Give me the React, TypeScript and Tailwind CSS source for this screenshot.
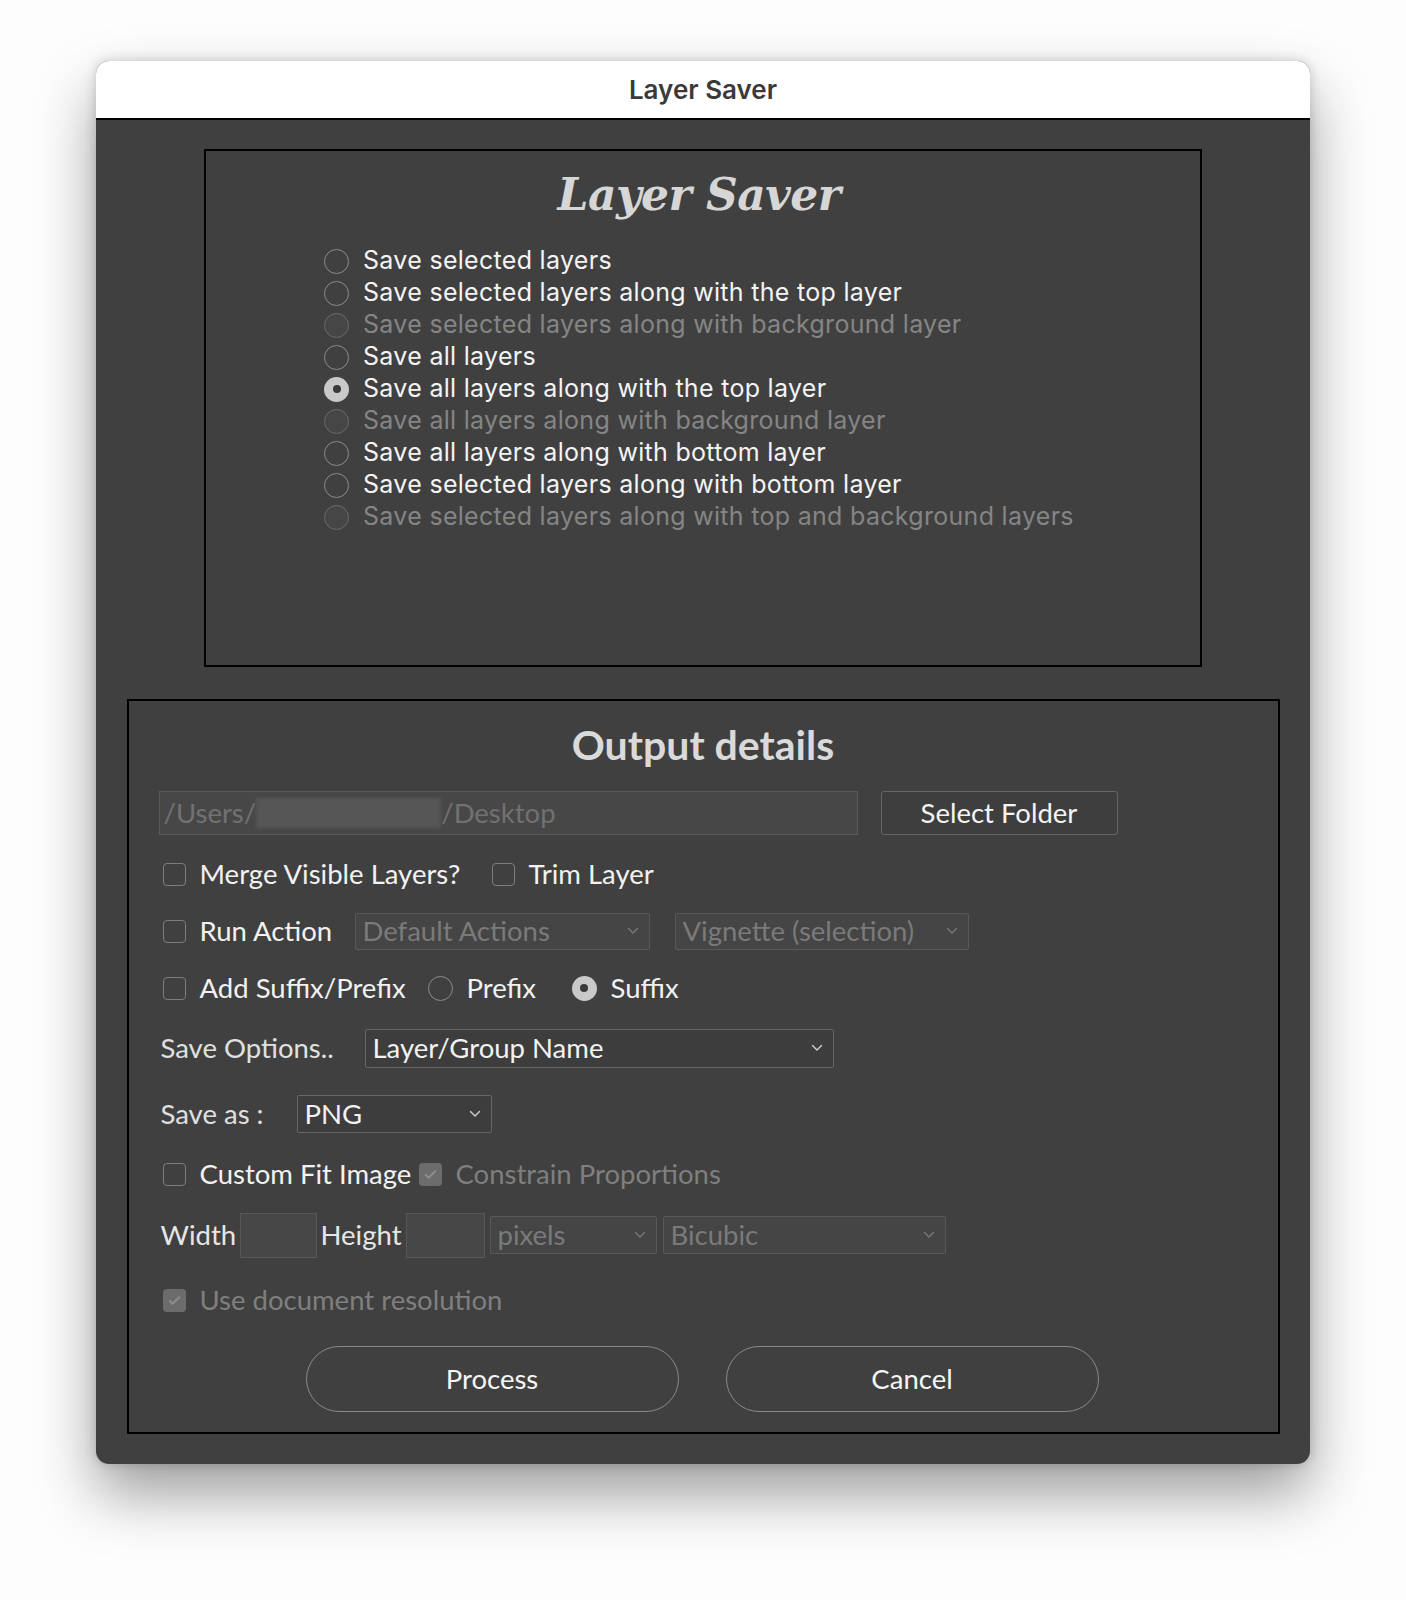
import React from 'react';

const sf = "font-['Inter','Noto_Sans',sans-serif]";
const my = "font-['Lato','Open_Sans',sans-serif]";

const layerOptions = [
  { label: 'Save selected layers' },
  { label: 'Save selected layers along with the top layer' },
  { label: 'Save selected layers along with background layer', disabled: true },
  { label: 'Save all layers' },
  { label: 'Save all layers along with the top layer', checked: true },
  { label: 'Save all layers along with background layer', disabled: true },
  { label: 'Save all layers along with bottom layer' },
  { label: 'Save selected layers along with bottom layer' },
  { label: 'Save selected layers along with top and background layers', disabled: true },
];

const Radio: React.FC<{ checked?: boolean; disabled?: boolean }> = ({ checked, disabled }) => {
  if (checked) {
    return (
      <span className="w-[25px] h-[25px] rounded-full bg-[#c9c9c9] flex items-center justify-center shrink-0">
        <span className="w-[8px] h-[8px] rounded-full bg-[#3a3a3a]" />
      </span>
    );
  }
  return (
    <span
      className={`w-[25px] h-[25px] rounded-full border-[1.5px] shrink-0 ${
        disabled ? 'border-[#6b6b6b] bg-[#464646]' : 'border-[#8c8c8c]'
      }`}
    />
  );
};

const Checkbox: React.FC<{ checked?: boolean; disabled?: boolean }> = ({ checked, disabled }) => {
  if (checked && disabled) {
    return (
      <span className="w-[23px] h-[23px] rounded-[4px] bg-[#6c6c6c] flex items-center justify-center shrink-0">
        <svg width="15" height="15" viewBox="0 0 16 16" fill="none">
          <path d="M3 8.5l3 3 7-7" stroke="#8c8c8c" strokeWidth="2.2" strokeLinecap="round" strokeLinejoin="round" />
        </svg>
      </span>
    );
  }
  return <span className="w-[23px] h-[23px] rounded-[4px] border-[1.5px] border-[#7d7d7d] shrink-0" />;
};

const Chevron: React.FC<{ color?: string }> = ({ color = '#d0d0d0' }) => (
  <svg width="12" height="8" viewBox="0 0 12 8" fill="none" className="shrink-0">
    <path d="M1.5 1.5L6 6l4.5-4.5" stroke={color} strokeWidth="1.4" strokeLinecap="round" strokeLinejoin="round" />
  </svg>
);

const Select: React.FC<{ value: string; width: string; height?: string; disabled?: boolean }> = ({
  value,
  width,
  height = 'h-[37px]',
  disabled,
}) => (
  <div
    className={`${width} ${height} flex items-center justify-between pl-[7px] pr-[10px] rounded-[2px] border-[1.5px] ${
      disabled ? 'border-[#595959] bg-[#454545] text-[#7a7a7a]' : 'border-[#666666] bg-[#3d3d3d] text-[#f2f2f2]'
    }`}
  >
    <span className="truncate">{value}</span>
    <Chevron color={disabled ? '#7a7a7a' : '#d0d0d0'} />
  </div>
);

const App: React.FC = () => {
  return (
    <div className="w-[1406px] h-[1600px] bg-[#fdfdfd] flex justify-center pt-[61px]">
      <div className="w-[1214px] h-[1403px] rounded-[13px] overflow-hidden bg-[#404040] shadow-[0_30px_60px_rgba(0,0,0,0.38),0_0_12px_rgba(0,0,0,0.18)] flex flex-col">
        {/* title bar */}
        <div className={`h-[59px] shrink-0 bg-white border-b-2 border-black flex items-center justify-center ${sf}`}>
          <span className="text-[26px] font-semibold text-[#3a3a3a]">Layer Saver</span>
        </div>

        <div className="flex-1 flex flex-col items-center pt-[29px]">
          {/* layer options box */}
          <div className="w-[998px] h-[518px] border-2 border-black pt-[14px]">
            <div className="h-[60px] flex items-center justify-center pr-[8px]">
              <span className="font-['DejaVu_Serif',serif] italic font-bold text-[44px] text-[#d6d6d6] tracking-[-0.5px]">
                Layer Saver
              </span>
            </div>
            <div className={`mt-[20px] pl-[118px] ${sf}`}>
              {layerOptions.map((o) => (
                <div key={o.label} className="h-[32px] flex items-center gap-[14px]">
                  <Radio checked={o.checked} disabled={o.disabled} />
                  <span
                    className={`text-[25px] tracking-[0.3px] ${o.disabled ? 'text-[#858585]' : 'text-[#f4f4f4]'}`}
                  >
                    {o.label}
                  </span>
                </div>
              ))}
            </div>
          </div>

          {/* output details box */}
          <div className={`mt-[32px] w-[1153px] h-[735px] border-2 border-black pt-[14px] pl-[30px] text-[27.5px] text-[#f2f2f2] ${my}`}>
            <div className="h-[60px] flex items-center justify-center pr-[30px]">
              <span className="text-[41px] font-bold text-[#dadada]">Output details</span>
            </div>

            <div className="mt-[16px] h-[44px] flex items-center">
              <div className="w-[699px] h-[44px] flex items-center border-[1.5px] border-[#5a5a5a] bg-[#474747] pl-[4px] text-[#717171]">
                <span>/Users/</span>
                <span className="w-[185px] h-[30px] bg-[#565656] blur-[1.5px]" />
                <span>/Desktop</span>
              </div>
              <button className="ml-[23px] w-[237px] h-[44px] rounded-[3px] border-[1.5px] border-[#666666] bg-[#3e3e3e] text-[#f4f4f4]">
                Select Folder
              </button>
            </div>

            <div className="mt-[19px] h-[40px] flex items-center pl-[4px]">
              <div className="w-[329px] flex items-center gap-[14px]">
                <Checkbox />
                <span>Merge Visible Layers?</span>
              </div>
              <div className="flex items-center gap-[14px]">
                <Checkbox />
                <span>Trim Layer</span>
              </div>
            </div>

            <div className="mt-[17px] h-[40px] flex items-center pl-[4px]">
              <div className="w-[192px] flex items-center gap-[14px]">
                <Checkbox />
                <span>Run Action</span>
              </div>
              <Select value="Default Actions" width="w-[295px]" disabled />
              <div className="ml-[25px]">
                <Select value="Vignette (selection)" width="w-[294px]" disabled />
              </div>
            </div>

            <div className="mt-[17px] h-[40px] flex items-center pl-[4px]">
              <div className="w-[265px] flex items-center gap-[14px]">
                <Checkbox />
                <span>Add Suffix/Prefix</span>
              </div>
              <div className="w-[144px] flex items-center gap-[14px]">
                <Radio />
                <span>Prefix</span>
              </div>
              <div className="flex items-center gap-[14px]">
                <Radio checked />
                <span>Suffix</span>
              </div>
            </div>

            <div className="mt-[20px] h-[40px] flex items-center pl-[2px]">
              <span className="w-[204px] text-[#e0e0e0]">Save Options..</span>
              <Select value="Layer/Group Name" width="w-[469px]" height="h-[39px]" />
            </div>

            <div className="mt-[26px] h-[40px] flex items-center pl-[2px]">
              <span className="w-[136px] text-[#e0e0e0]">Save as :</span>
              <Select value="PNG" width="w-[195px]" height="h-[38px]" />
            </div>

            <div className="mt-[20px] h-[40px] flex items-center pl-[4px]">
              <div className="w-[256px] flex items-center gap-[14px]">
                <Checkbox />
                <span>Custom Fit Image</span>
              </div>
              <div className="flex items-center gap-[14px] text-[#7f7f7f]">
                <Checkbox checked disabled />
                <span>Constrain Proportions</span>
              </div>
            </div>

            <div className="mt-[18px] h-[46px] flex items-center pl-[2px]">
              <span className="w-[79px] text-[#e6e6e6]">Width</span>
              <span className="w-[77px] h-[45px] border-[1.5px] border-[#575757] bg-[#474747]" />
              <span className="w-[89px] pl-[4px] text-[#e6e6e6]">Height</span>
              <span className="w-[79px] h-[45px] border-[1.5px] border-[#575757] bg-[#474747]" />
              <div className="ml-[5px]">
                <Select value="pixels" width="w-[167px]" height="h-[38px]" disabled />
              </div>
              <div className="ml-[6px]">
                <Select value="Bicubic" width="w-[283px]" height="h-[38px]" disabled />
              </div>
            </div>

            <div className="mt-[22px] h-[40px] flex items-center pl-[4px] text-[#7f7f7f]">
              <div className="flex items-center gap-[14px]">
                <Checkbox checked disabled />
                <span>Use document resolution</span>
              </div>
            </div>

            <div className="mt-[26px] flex items-center pl-[147px] gap-[47px]">
              <button className="w-[373px] h-[66px] rounded-full border-[1.5px] border-[#8a8a8a] text-[#f6f6f6]">
                Process
              </button>
              <button className="w-[373px] h-[66px] rounded-full border-[1.5px] border-[#8a8a8a] text-[#f6f6f6]">
                Cancel
              </button>
            </div>
          </div>
        </div>
      </div>
    </div>
  );
};

export default App;
